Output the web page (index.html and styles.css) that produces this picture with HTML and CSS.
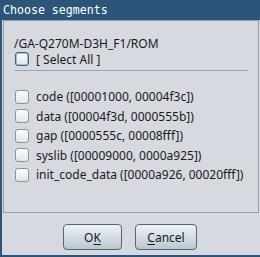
FILE: index.html
```html
<!DOCTYPE html>
<html>
<head>
<meta charset="utf-8">
<link rel="stylesheet" href="styles.css">
</head>
<body>
<div class="window">
  <div class="titlebar">Choose segments</div>
  <div class="body">
    <div class="panel">
      <div class="path">/GA-Q270M-D3H_F1/ROM</div>
      <label class="row selall"><span class="cb focus"></span><span>[ Select All ]</span></label>
      <div class="sep"></div>
      <div class="list">
        <label class="row"><span class="cb"></span><span>code ([00001000, 00004f3c])</span></label>
        <label class="row"><span class="cb"></span><span>data ([00004f3d, 0000555b])</span></label>
        <label class="row"><span class="cb"></span><span>gap ([0000555c, 00008fff])</span></label>
        <label class="row"><span class="cb"></span><span>syslib ([00009000, 0000a925])</span></label>
        <label class="row"><span class="cb"></span><span>init_code_data ([0000a926, 00020fff])</span></label>
      </div>
    </div>
    <div class="buttons">
      <button class="btn ok">O<u>K</u></button>
      <button class="btn cancel"><u>C</u>ancel</button>
    </div>
  </div>
</div>
</body>
</html>
```
FILE: styles.css
```css
html, body {
  margin: 0;
  padding: 0;
}
body {
  width: 260px;
  height: 257px;
  overflow: hidden;
  font-family: "Noto Sans", "Open Sans", sans-serif;
  font-size: 12px;
  color: #1a1a1a;
}
.window {
  width: 260px;
  height: 257px;
  box-sizing: border-box;
  background: #d6d9df;
  border-left: 2px solid #2b5679;
  border-bottom: 2px solid #2b5679;
  display: flex;
  flex-direction: column;
}
.titlebar {
  height: 20px;
  margin-left: -2px;
  padding-left: 3px;
  background: #2b5679;
  color: #ffffff;
  font-family: "DejaVu Sans Mono", monospace;
  font-size: 11.6px;
  line-height: 20px;
}
.body {
  flex: 1;
  display: flex;
  flex-direction: column;
  padding: 0 1px 0 1px;
}
.panel {
  height: 193px;
  box-sizing: border-box;
  border: 1px solid #9b9ea4;
  padding: 15px 0 0 10px;
}
.path {
  height: 16px;
  line-height: 16px;
}
.row {
  display: flex;
  align-items: center;
  gap: 7px;
  height: 19.5px;
  padding-left: 1px;
}
.selall {
  height: 16px;
  margin-top: -1px;
}
.cb {
  width: 12px;
  height: 12px;
  border: 1px solid #8d939b;
  border-radius: 3px;
  background: linear-gradient(#fbfcfd, #e2e5ea);
  flex: none;
}
.cb.focus {
  border-color: #3d5f80;
  box-shadow: inset 0 0 0 1px #a9bdd0;
}
.sep {
  height: 1px;
  background: #a2a5ad;
  margin: 3px 10px 0 0;
}
.list {
  margin-top: 16px;
}
.buttons {
  display: flex;
  justify-content: center;
  gap: 13px;
  padding-top: 11px;
  padding-right: 2px;
}
.btn {
  height: 26px;
  box-sizing: border-box;
  border: 1px solid #56646f;
  border-radius: 4px;
  background: linear-gradient(#eef2f6, #d4dde6 50%, #b9c7d4);
  font-family: "Noto Sans", "Open Sans", sans-serif;
  font-size: 12px;
  color: #1a1a1a;
  padding: 0;
}
.btn u {
  text-decoration-thickness: 1px;
  text-underline-offset: 2px;
}
.ok {
  width: 59px;
}
.cancel {
  width: 62px;
}
```
